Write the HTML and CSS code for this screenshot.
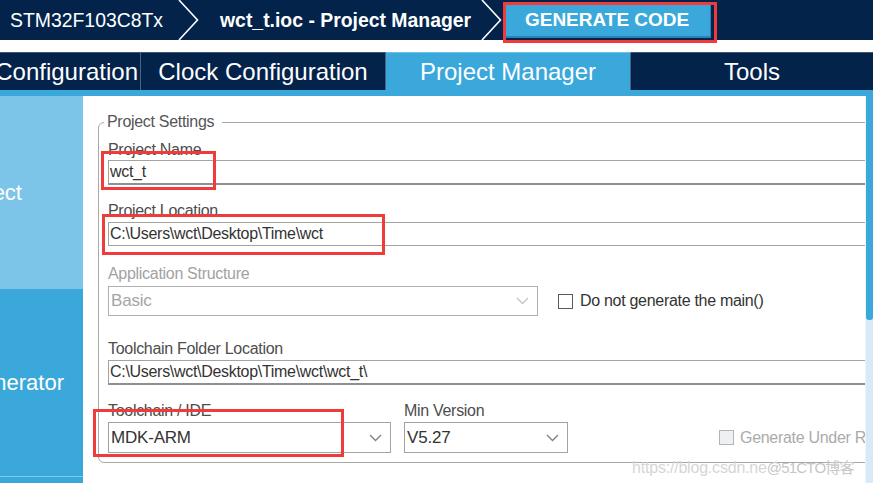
FILE: index.html
```html
<!DOCTYPE html>
<html lang="en">
<head>
<meta charset="utf-8">
<title>wct_t.ioc - Project Manager</title>
<link rel="stylesheet" href="styles.css">
</head>
<body>
<div class="app">
  <header class="topbar">
    <span class="crumb">STM32F103C8Tx</span>
    <svg class="chev chev-1" viewBox="0 0 21 40"><polyline points="1,0 19.5,20 1,40" fill="none" stroke="#fff" stroke-width="1.6"/></svg>
    <span class="crumb crumb-bold">wct_t.ioc - Project Manager</span>
    <svg class="chev chev-2" viewBox="0 0 21 40"><polyline points="1,0 19.5,20 1,40" fill="none" stroke="#fff" stroke-width="1.6"/></svg>
    <button class="gen">GENERATE CODE</button>
  </header>

  <nav class="tabs">
    <div class="tab tab-cut">Configuration</div>
    <div class="tab tab-mid">Clock Configuration</div>
    <div class="tab tab-mid tab-active">Project Manager</div>
    <div class="tab tab-last">Tools</div>
  </nav>
  <div class="strip"></div>

  <div class="main">
    <aside class="side">
      <div class="side-item side-project">Project</div>
      <div class="side-item side-codegen">Code Generator</div>
      <div class="side-item side-adv"></div>
    </aside>

    <section class="content">
      <fieldset class="group">
        <legend class="legend">Project Settings</legend>

        <div class="label lbl-1">Project Name</div>
        <div class="input input-focus">wct_t</div>

        <div class="label lbl-2">Project Location</div>
        <div class="input">C:\Users\wct\Desktop\Time\wct</div>

        <div class="label lbl-3 label-disabled">Application Structure</div>
        <div class="row">
          <div class="select select-app select-disabled">
            <span>Basic</span>
            <svg class="arrow" viewBox="0 0 13 8"><polyline points="1,1 6.5,6.5 12,1" fill="none" stroke="#c4c4c4" stroke-width="1.3"/></svg>
          </div>
          <span class="check"></span>
          <span class="check-text">Do not generate the main()</span>
        </div>

        <div class="label lbl-4">Toolchain Folder Location</div>
        <div class="input input-focus">C:\Users\wct\Desktop\Time\wct\wct_t\</div>

        <div class="row-bottom">
          <div class="col-tool">
            <div class="label lbl-5">Toolchain / IDE</div>
            <div class="select select-low">
              <span>MDK-ARM</span>
              <svg class="arrow" viewBox="0 0 13 8"><polyline points="1,1 6.5,6.5 12,1" fill="none" stroke="#808080" stroke-width="1.3"/></svg>
            </div>
          </div>
          <div class="col-min">
            <div class="label lbl-5">Min Version</div>
            <div class="select select-low">
              <span>V5.27</span>
              <svg class="arrow" viewBox="0 0 13 8"><polyline points="1,1 6.5,6.5 12,1" fill="none" stroke="#808080" stroke-width="1.3"/></svg>
            </div>
          </div>
          <div class="gen-under">
            <span class="check check-disabled"></span>
            <span>Generate Under Root</span>
          </div>
        </div>
      </fieldset>
    </section>

    <div class="scroll"><div class="thumb"></div></div>
  </div>

  <div class="mark mark-gen"></div>
  <div class="mark mark-name"></div>
  <div class="mark mark-loc"></div>
  <div class="mark mark-ide"></div>

  <div class="watermark"><span class="wm-url">https://blog.csdn.ne</span><span class="wm-name">@51CTO博客</span></div>
</div>
</body>
</html>
```

FILE: styles.css
```css
* { box-sizing: border-box; }

html, body {
  margin: 0;
  padding: 0;
}

body {
  width: 873px;
  height: 483px;
  overflow: hidden;
  background: #ffffff;
  font-family: "Liberation Sans", Arial, sans-serif;
}

.app {
  position: relative;
  width: 873px;
  height: 483px;
  overflow: hidden;
  display: flex;
  flex-direction: column;
}

/* ---------- top breadcrumb bar ---------- */
.topbar {
  flex: none;
  height: 40px;
  background: #03234b;
  display: flex;
  align-items: center;
  padding-left: 10px;
  color: #ffffff;
}

.crumb {
  font-size: 19.4px;
  white-space: nowrap;
}

.crumb-bold { font-weight: bold; }

.chev {
  flex: none;
  width: 21px;
  height: 40px;
  align-self: flex-start;
}

.chev-1 { margin-left: 15px; margin-right: 21px; }
.chev-2 { margin-left: 10px; margin-right: 2px; }

.gen {
  align-self: flex-start;
  margin-top: 3px;
  width: 207px;
  height: 35px;
  padding: 0;
  border: none;
  border-right: 1px solid #2b83b5;
  border-bottom: 2px solid #2b83b5;
  background: #3aa8db;
  color: #ffffff;
  font: bold 19px "Liberation Sans", Arial, sans-serif;
}

/* ---------- tabs ---------- */
.tabs {
  flex: none;
  margin-top: 12px;
  height: 38px;
  display: flex;
  background: #03234b;
}

.tab {
  height: 100%;
  display: flex;
  align-items: center;
  justify-content: center;
  overflow: hidden;
  white-space: nowrap;
  color: #ffffff;
  font-size: 24px;
  border-top: 1px solid #3d5879;
  border-right: 1px solid #4a6488;
}

.tab-cut {
  width: 141px;
  justify-content: flex-end;
  padding-right: 2px;
}

.tab-mid { width: 245px; }

.tab-active {
  background: #3aa8db;
  border-top-color: #6cc0e8;
}

.tab-last {
  flex: 1;
  border-right: none;
}

.strip {
  flex: none;
  height: 6px;
  background: #3aa8db;
}

/* ---------- main ---------- */
.main {
  flex: 1;
  display: flex;
  min-height: 0;
}

.side {
  flex: none;
  width: 83px;
  display: flex;
  flex-direction: column;
  background: #3aa8db;
}

.side-item {
  flex: none;
  display: flex;
  align-items: center;
  justify-content: flex-end;
  overflow: hidden;
  white-space: nowrap;
  color: #ffffff;
  font-size: 22px;
}

.side-project {
  height: 193px;
  background: #7cc4e8;
  padding-right: 61px;
}

.side-codegen {
  height: 188px;
  border-bottom: 1px solid #82c8ea;
  padding-right: 19px;
}

.side-adv { flex: 1; }

.content {
  flex: 1;
  min-width: 0;
  overflow: hidden;
  background: #ffffff;
  padding: 17px 0 0 15px;
}

.group {
  margin: 0 -30px 0 0;
  min-width: 0;
  padding: 0 0 9px 9px;
  border: 1px solid #a8a8a8;
  border-radius: 6px;
}

.legend {
  margin-left: -4px;
  padding: 0 8px 0 3px;
  font-size: 16px;
  line-height: 18px;
  color: #555555;
  letter-spacing: -0.3px;
}

.label {
  font-size: 16px;
  line-height: 18px;
  color: #4d4d4d;
  letter-spacing: -0.3px;
  white-space: nowrap;
}

.label-disabled { color: #a2a2a2; }

.lbl-1 { margin-top: 10px; margin-bottom: 1px; }
.lbl-2 { margin-top: 17px; margin-bottom: 2px; }
.lbl-3 { margin-top: 19px; margin-bottom: 3px; }
.lbl-4 { margin-top: 24px; margin-bottom: 2px; }
.lbl-5 { margin-top: 17px; margin-bottom: 2px; }

.input {
  height: 24px;
  display: flex;
  align-items: center;
  padding-left: 1px;
  border: 1px solid #a3a3a3;
  font-size: 16px;
  color: #333333;
  letter-spacing: -0.3px;
  white-space: nowrap;
}

.input-focus {
  height: 25px;
  border-bottom: 2px solid #8f8f8f;
}

.select {
  display: flex;
  align-items: center;
  justify-content: space-between;
  padding: 0 8px 0 2px;
  border: 1px solid #a3a3a3;
  font-size: 17px;
  color: #333333;
  letter-spacing: -0.2px;
}

.select-app {
  width: 430px;
  height: 30px;
}

.select-low { height: 31px; }

.select-disabled {
  color: #a5a5a5;
  border-color: #b0b0b0;
}

.arrow {
  width: 13px;
  height: 8px;
  flex: none;
}

.row {
  display: flex;
  align-items: center;
}

.check {
  flex: none;
  width: 15px;
  height: 15px;
  border: 1.5px solid #5a5a5a;
  background: #ffffff;
  margin-left: 20px;
  margin-right: 7px;
}

.check-text {
  font-size: 16px;
  color: #333333;
  letter-spacing: -0.3px;
  white-space: nowrap;
}

.row-bottom {
  display: flex;
  align-items: flex-end;
}

.col-tool { width: 283px; flex: none; }

.col-min {
  width: 164px;
  flex: none;
  margin-left: 13px;
}

.gen-under {
  display: flex;
  align-items: center;
  height: 31px;
  margin-left: 131px;
  font-size: 16px;
  color: #ababab;
  letter-spacing: -0.3px;
  white-space: nowrap;
}

.check-disabled {
  border-color: #b4b4b4;
  background: #eef1f4;
  margin-right: 6px;
}

.scroll {
  flex: none;
  width: 8px;
  background: #d8e9f7;
  border-left: 1px solid #eef4fa;
}

.thumb {
  height: 224px;
  background: #3aa8db;
  border-radius: 0 0 3px 3px;
}

/* ---------- annotation overlays ---------- */
.mark {
  position: absolute;
  border: 3px solid #f03b3b;
  pointer-events: none;
}

.mark-gen { left: 503px; top: 2px; width: 214px; height: 41px; }
.mark-name { left: 101px; top: 151px; width: 115px; height: 39px; }
.mark-loc { left: 102px; top: 214px; width: 283px; height: 41px; }
.mark-ide { left: 93px; top: 409px; width: 251px; height: 48px; }

.watermark {
  position: absolute;
  left: 632px;
  top: 456px;
  white-space: nowrap;
  font-family: "Liberation Sans", "Noto Sans CJK SC", sans-serif;
}

.wm-url {
  color: #d6d6d6;
  font-size: 16px;
  letter-spacing: -0.2px;
}

.wm-name {
  color: #c6c6c6;
  font-size: 15px;
  letter-spacing: -0.8px;
}
```
